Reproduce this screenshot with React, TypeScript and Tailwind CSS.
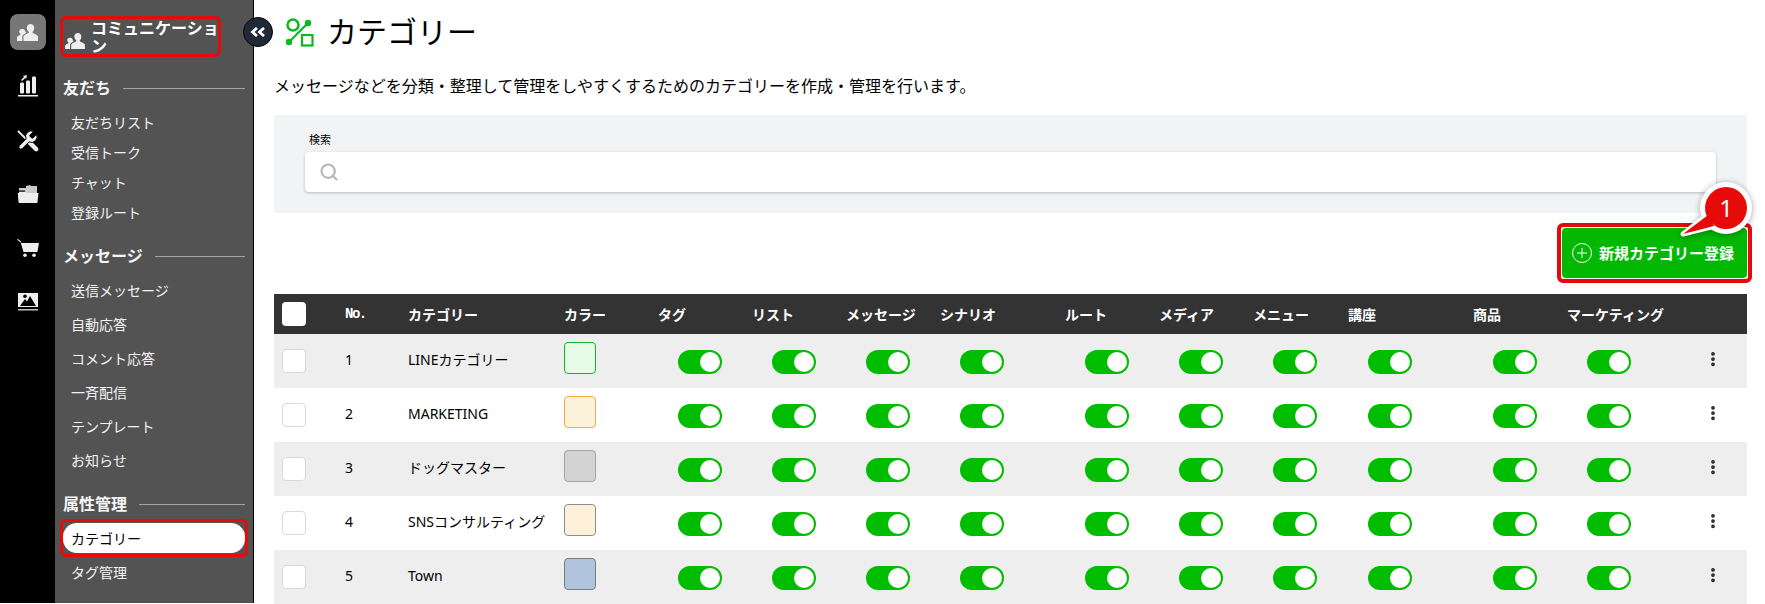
import React from 'react';
import { Search, MoreVertical, Plus } from 'lucide-react';

const font = 'font-["Noto_Sans","Noto_Sans_CJK_JP",sans-serif]';

const UsersIcon = ({ className }: { className?: string }) => (
  <svg viewBox="0 0 21 17" className={className} fill="currentColor">
    <path d="M13.500 0c2.300 0 3.700 1.800 3.700 4 0 1.500-.6 2.900-1.500 3.800-.3.300-.3.900.1 1.200 1.400.8 4.200 1.500 5.200 3.300V17H6.500v-4.700c1-1.800 3.700-2.500 5.100-3.300.4-.3.400-.9.100-1.200C10.800 6.900 9.800 5.500 9.800 4c0-2.200 1.400-4 3.700-4z" />
    <path d="M5.200 5c1.100 0 2 .5 2.600 1.300.2.900.7 1.800 1.300 2.500-.2.400-.5.500-.8.700-1.200.7-2.400 1.300-3 2.500V17H0v-3.800c.8-1.300 2.400-1.800 3.300-2.400.3-.2.300-.7.100-.9C2.700 9.200 2.200 8.200 2.200 7.500 2.200 6 3.400 5 5.200 5z" />
  </svg>
);

const ChartIcon = () => (
  <svg viewBox="0 0 20 22" className="w-5 h-[22px]" fill="currentColor">
    <rect x="2" y="7.500" width="4" height="11" rx="1.200" />
    <rect x="8" y="5.500" width="4" height="13" rx="1.200" />
    <rect x="14" y="1.500" width="4" height="17" rx="1.200" />
    <rect x="0" y="20" width="20" height="1.500" />
    <path d="M3 5l3-3-1-1 4-1-.8 4-1-1-3 3z" />
  </svg>
);

const ToolsIcon = () => (
  <svg viewBox="0 0 24 24" className="w-[23px] h-[23px]" fill="none">
    <path d="M2 2l9 9" stroke="currentColor" strokeWidth="2" />
    <path d="M15 15l6 6" stroke="currentColor" strokeWidth="4.500" strokeLinecap="round" />
    <path
      fill="currentColor"
      stroke="#000"
      strokeWidth="1"
      d="M14.700 6.300a1 1 0 0 0 0 1.400l1.600 1.600a1 1 0 0 0 1.400 0l3.770-3.770a6 6 0 0 1-7.940 7.940l-6.910 6.910a2.120 2.120 0 0 1-3-3l6.910-6.910a6 6 0 0 1 7.940-7.940l-3.760 3.760z"
    />
  </svg>
);

const FolderIcon = () => (
  <svg viewBox="0 0 22 18" className="w-[22px] h-[18px]" fill="currentColor">
    <path d="M2 3h7V1l4-1 1 1h6v7H2z" opacity="0.85" />
    <path d="M2 5.500h6v1.200H2z" fill="#000" />
    <path d="M0.800 8h20.700l-1 9.200c0 .5-.4.800-.9.800H2.500c-.5 0-.9-.3-1-.8z" />
    <path d="M2 7h6.500l1 1H2z" />
  </svg>
);

const CartIcon = () => (
  <svg viewBox="0 0 22 18" className="w-[22px] h-[18px]" fill="currentColor">
    <path d="M0 .8L1 0l3 2.500.3 1.500H22l-1.600 9H6.500L3.600 3.200z" />
    <circle cx="8" cy="16.200" r="1.800" />
    <circle cx="17" cy="16.200" r="1.800" />
  </svg>
);

const ImageIcon = () => (
  <svg viewBox="0 0 20 18" className="w-5 h-[18px]">
    <rect width="20" height="14" fill="currentColor" />
    <path d="M2 13l5-7 2 2.500 3-5.500 6 10z" fill="#000" />
    <circle cx="7" cy="3.200" r="1.800" fill="#000" />
    <rect y="16" width="20" height="1.500" fill="currentColor" opacity="0.8" />
  </svg>
);

const CategoryIcon = () => (
  <svg viewBox="0 0 30 30" className="w-[30px] h-[30px] text-[#0bb81f]" fill="none" stroke="currentColor">
    <circle cx="9" cy="8" r="5.500" strokeWidth="2.500" />
    <rect x="18" y="18" width="10.500" height="10.500" strokeWidth="2.200" />
    <path d="M5 25L24 6" strokeWidth="2.200" />
    <circle cx="5" cy="25" r="3.200" fill="currentColor" stroke="none" />
    <circle cx="24" cy="6" r="3.200" fill="currentColor" stroke="none" />
  </svg>
);

const Toggle = () => (
  <div className="w-11 h-6 rounded-full bg-[#00bd00] flex items-center justify-end pr-0.5">
    <div className="w-5 h-5 rounded-full bg-white" />
  </div>
);

const railIcons = [<ChartIcon />, <ToolsIcon />, <FolderIcon />, <CartIcon />, <ImageIcon />];

const sections = [
  { title: '友だち', top: 'mt-[16px]', list: 'mt-[4px]', item: 'h-[30px]', items: ['友だちリスト', '受信トーク', 'チャット', '登録ルート'] },
  { title: 'メッセージ', top: 'mt-[14px]', list: 'mt-[2px]', item: 'h-[34px]', items: ['送信メッセージ', '自動応答', 'コメント応答', '一斉配信', 'テンプレート', 'お知らせ'] },
  { title: '属性管理', top: 'mt-[12px]', list: 'mt-[4px]', item: 'h-[33px]', items: ['カテゴリー', 'タグ管理'] },
];

// column widths, in order: checkbox, no, name, color, then the switch columns
const cols = 'grid grid-cols-[70px_64px_156px_95px_94px_94px_94px_125px_94px_94px_95px_125px_94px_146px_28px]';
const switchHeads = ['タグ', 'リスト', 'メッセージ', 'シナリオ', 'ルート', 'メディア', 'メニュー', '講座', '商品', 'マーケティング'];

const rows = [
  { no: 1, name: 'LINEカテゴリー', bg: 'bg-[#e8fde8]', border: 'border-[#0bb81f]' },
  { no: 2, name: 'MARKETING', bg: 'bg-[#fbf2d9]', border: 'border-[#f5a94a]' },
  { no: 3, name: 'ドッグマスター', bg: 'bg-[#d3d3d3]', border: 'border-[#a3a3a3]' },
  { no: 4, name: 'SNSコンサルティング', bg: 'bg-[#fef0d9]', border: 'border-[#8d8d8d]' },
  { no: 5, name: 'Town', bg: 'bg-[#b0c4de]', border: 'border-[#7d7d7d]' },
];

export default function App() {
  return (
    <div className={`${font} relative flex h-[604px] w-[1765px] overflow-hidden bg-white text-black`}>
      {/* Icon rail */}
      <nav className="w-[55px] h-[603px] shrink-0 bg-black text-[#eeeeee] flex flex-col items-center pt-3.5">
        <div className="w-9 h-9 rounded-lg bg-[#777777] flex items-center justify-center mb-[25px]">
          <UsersIcon className="w-[21px] h-[17px]" />
        </div>
        <div className="flex flex-col items-center gap-[32px]">
          {railIcons.map((icon, i) => (
            <div key={i} className="h-[22px] flex items-center">{icon}</div>
          ))}
        </div>
      </nav>

      {/* Sub menu */}
      <aside className="w-[199px] h-[603px] shrink-0 bg-[#535353] border-r border-black text-white px-[8px] pt-[16px]">
        <div className="w-[161px] h-[41px] -ml-[3px] border-[3px] border-[#e60a0a] rounded-md flex items-center pl-[1px]">
          <UsersIcon className="w-[22px] h-[16px] text-[#eeeeee] shrink-0 mt-2 mr-[5px]" />
          <span className="w-[130px] shrink-0 text-[16px] leading-[18px] font-bold break-all">コミュニケーション</span>
        </div>
        {sections.map((s) => (
          <div key={s.title} className={s.top}>
            <div className="flex items-center gap-3 h-[30px]">
              <span className="text-[16px] font-bold text-[#f5f5f5] whitespace-nowrap">{s.title}</span>
              <div className="flex-1 h-px bg-[#a3a3a8]" />
            </div>
            <ul className={s.list}>
              {s.items.map((item) =>
                item === 'カテゴリー' ? (
                  <li key={item} className="-mx-[3px] -mt-[4px] mb-[-1px] border-[3px] border-[#e60a0a] rounded-md py-px">
                    <div className="h-[30px] rounded-[14px] bg-white text-black flex items-center pl-[8px] text-[14px]">{item}</div>
                  </li>
                ) : (
                  <li key={item} className={`${s.item} flex items-center pl-[8px] text-[14px] text-[#f2f2f2]`}>
                    {item}
                  </li>
                ),
              )}
            </ul>
          </div>
        ))}
      </aside>

      {/* Collapse button */}
      <div className="absolute left-[243px] top-[17px] w-[30px] h-[30px] rounded-full bg-[#1f2937] border border-black flex items-center justify-center">
        <svg viewBox="0 0 16 10" className="w-4 h-2.5" fill="none" stroke="#fff" strokeWidth="2.800">
          <path d="M7 1L2.500 5 7 9" />
          <path d="M14 1L9.500 5 14 9" />
        </svg>
      </div>

      {/* Main */}
      <main className="flex-1 min-w-0 pl-[20px] pr-[18px]">
        <div className="flex items-center gap-[13px] pl-[10px] h-[64px]">
          <CategoryIcon />
          <h1 className="text-[30px] font-normal leading-none">カテゴリー</h1>
        </div>
        <p className="text-[16px] leading-6 mt-[10px]">
          メッセージなどを分類・整理して管理をしやすくするためのカテゴリーを作成・管理を行います。
        </p>
        <div className="mt-[17px] h-[98px] bg-[#f2f3f5] px-[31px] pt-[16px]">
          <label className="block text-[11px] leading-[18px] pl-[4px]">検索</label>
          <div className="h-10 mt-[3px] bg-white rounded shadow-[0_1px_3px_rgba(0,0,0,0.25)] flex items-center pl-[14px]">
            <Search className="w-5 h-5 text-[#b5b5b5]" strokeWidth={2.5} />
          </div>
        </div>

        <div className="relative flex justify-end mt-[10px] h-[60px] -mr-[5px]">
          <button className="w-[195px] h-[60px] rounded-md border-[4px] border-[#e60a0a] bg-white flex">
            <span className="m-[1px] flex-1 rounded bg-[#03b803] text-white flex items-center justify-center gap-[7px] pr-[3px]">
              <span className="w-5 h-5 rounded-full border border-white flex items-center justify-center">
                <Plus className="w-4 h-4" strokeWidth={1.5} />
              </span>
              <span className="text-[15px] font-bold whitespace-nowrap">新規カテゴリー登録</span>
            </span>
          </button>
          {/* Step badge */}
          <svg viewBox="0 0 80 64" className="absolute right-[-4px] top-[-44px] w-20 h-16 drop-shadow-[0_1px_3px_rgba(0,0,0,0.35)]">
            <path d="M7 55L30 37 35 48z" fill="#fff" stroke="#fff" strokeWidth="5" strokeLinejoin="round" />
            <circle cx="50" cy="29" r="26" fill="#fff" />
            <path d="M7 55L32 36 38 47z" fill="#e60a0a" />
            <circle cx="50" cy="29" r="21" fill="#e60a0a" />
          </svg>
          <span className="absolute right-[5px] top-[-31px] w-[42px] text-center text-white text-[24px] leading-8">1</span>
        </div>

        <div className="mt-[11px]">
          <div className={`${cols} h-10 items-center bg-[#333333] text-white text-[14px] font-bold`}>
            <div className="pl-2">
              <div className="w-6 h-6 rounded bg-white" />
            </div>
            <div className={'font-["Liberation_Mono",monospace] text-[14px] tracking-[-1.500px] pl-[1px]'}>No.</div>
            <div>カテゴリー</div>
            <div>カラー</div>
            {switchHeads.map((h) => (
              <div key={h} className="whitespace-nowrap -ml-[1px]">{h}</div>
            ))}
            <div />
          </div>
          {rows.map((r, i) => (
            <div key={r.no} className={`${cols} h-[54px] items-center text-[14px] ${i % 2 === 0 ? 'bg-[#eeeeee]' : 'bg-white'}`}>
              <div className="pl-2">
                <div className="w-6 h-6 rounded bg-white border border-[#d8d8de]" />
              </div>
              <div className="pl-[1px] -mt-[3px]">{r.no}</div>
              <div className="whitespace-nowrap -mt-[3px]">{r.name}</div>
              <div className={`w-8 h-8 rounded border ${r.bg} ${r.border} -mt-[6px]`} />
              {switchHeads.map((h) => (
                <div key={h} className="pl-[19px] pt-[2px]">
                  <Toggle />
                </div>
              ))}
              <div className="-ml-[10px] -mt-[4px]">
                <MoreVertical className="w-[18px] h-[18px] text-[#222222]" strokeWidth={3} />
              </div>
            </div>
          ))}
        </div>
      </main>
    </div>
  );
}
